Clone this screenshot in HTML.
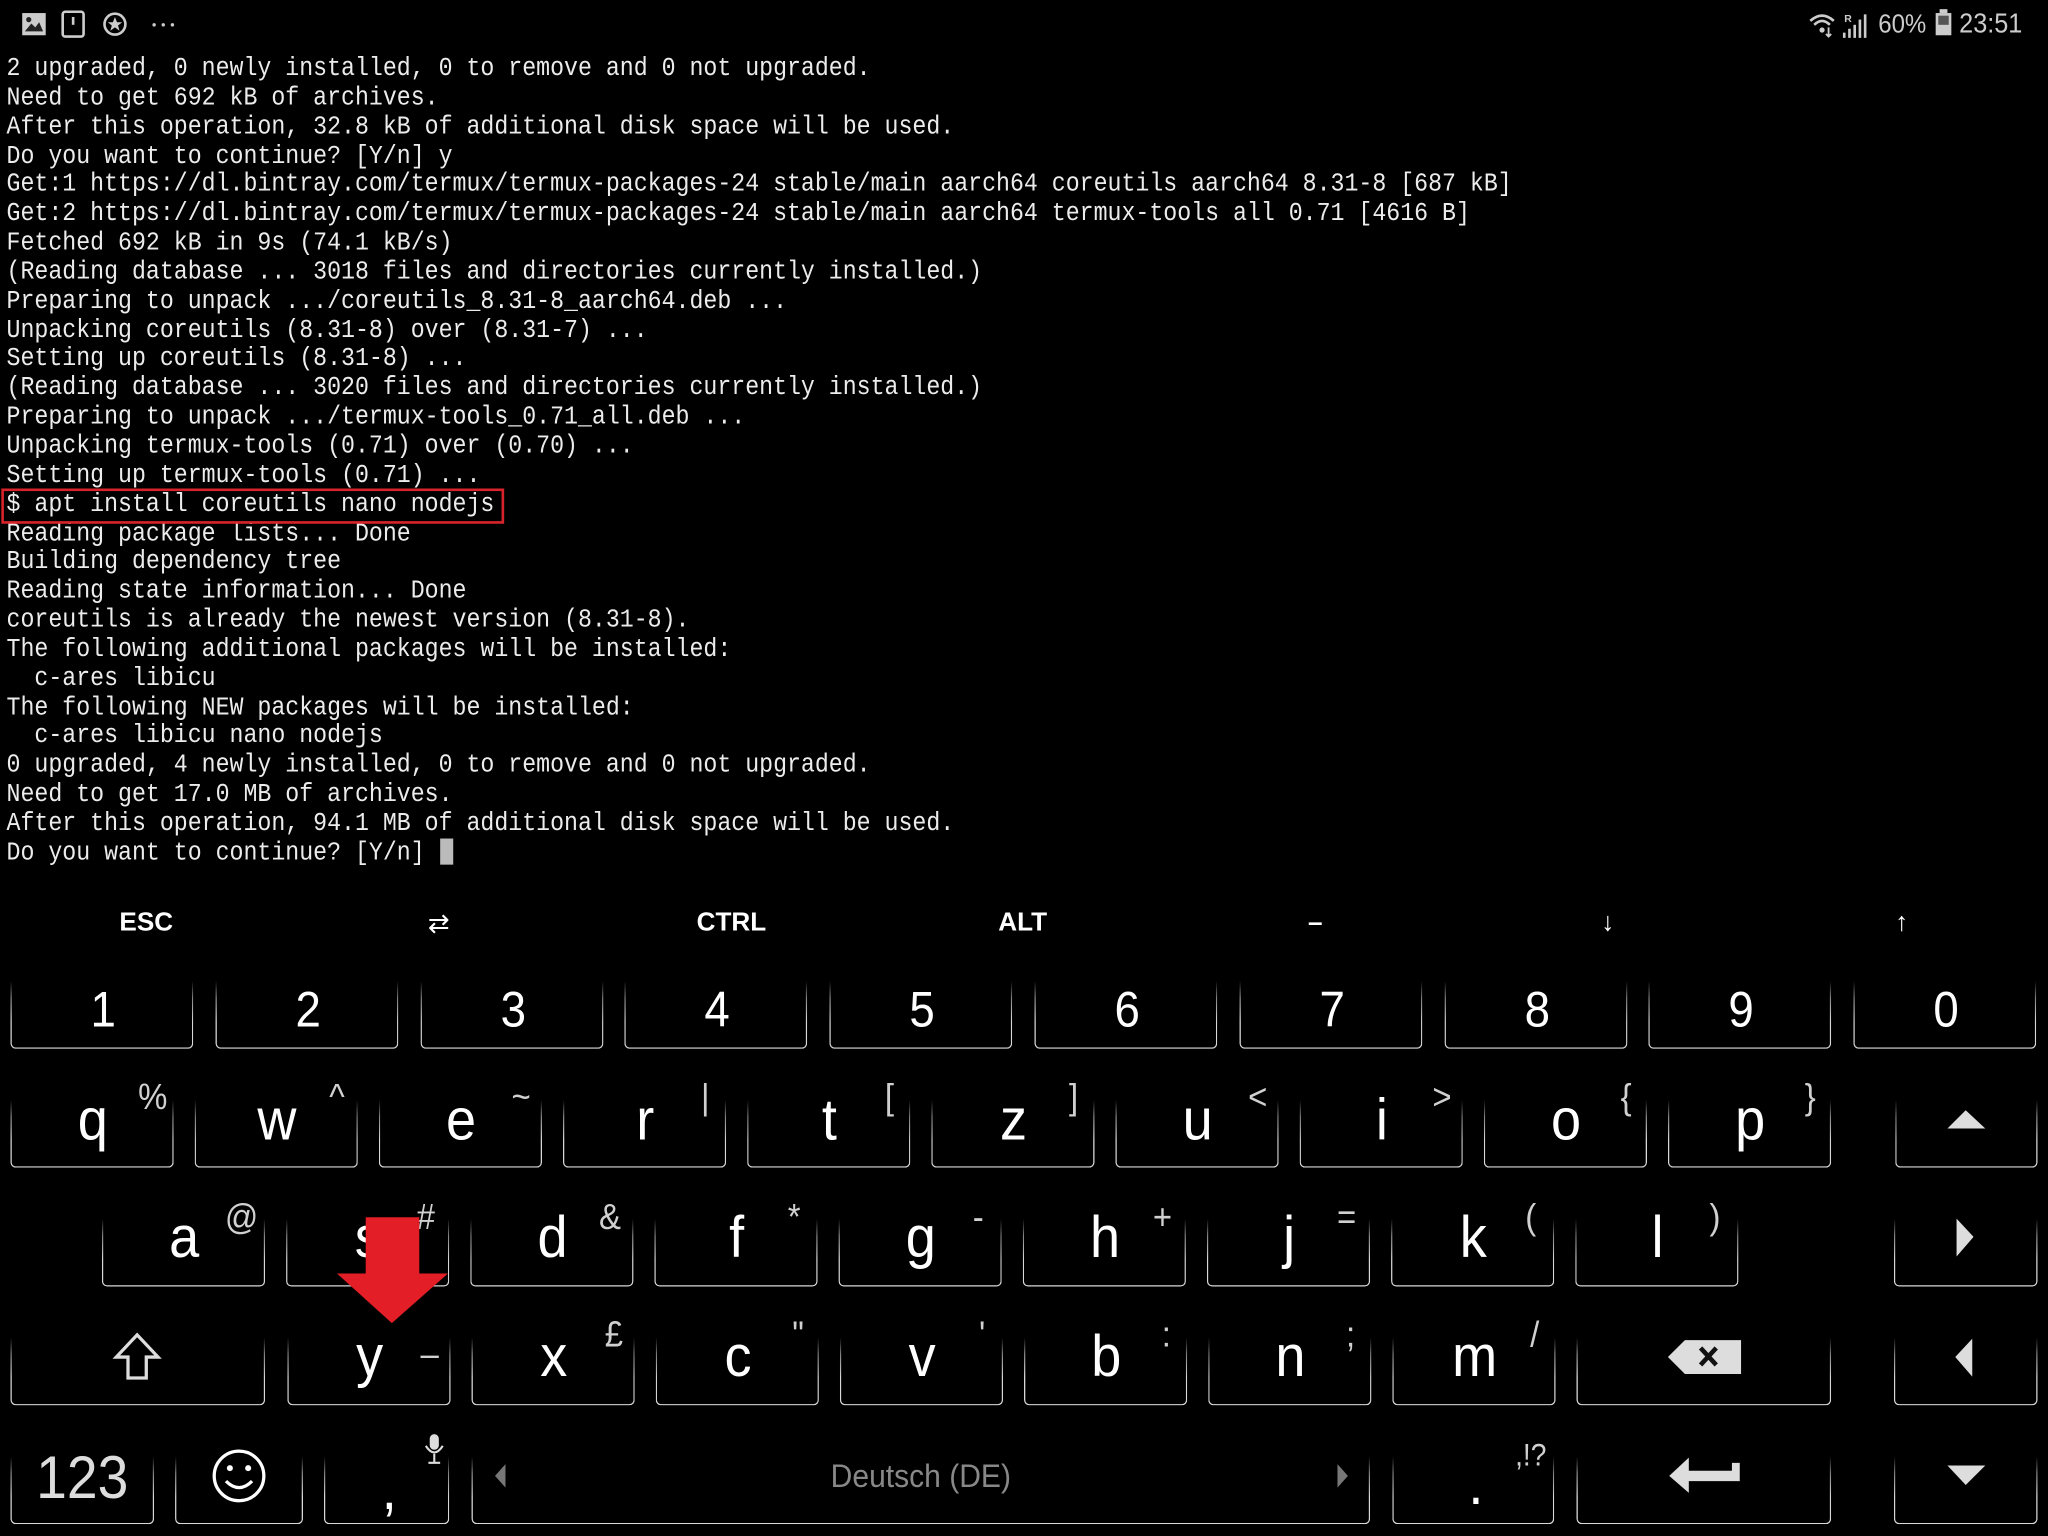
<!DOCTYPE html>
<html><head><meta charset="utf-8"><style>
html,body{margin:0;padding:0;background:#000;overflow:hidden}
#w{position:absolute;left:0;top:0;width:1568px;height:1176px;transform:scale(1.306122);transform-origin:0 0;background:#000;font-family:"Liberation Sans",sans-serif;color:#fff}
.t{position:absolute;left:5px;top:43px;font-family:"Liberation Mono",monospace;font-size:17.8px;line-height:19.84px;color:#ececec;white-space:pre;margin:0;transform:scaleY(1.12);transform-origin:0 0}
.k{position:absolute;height:52px;border:1.6px solid #d8d8d8;border-top:none;border-radius:0 0 4px 4px;box-sizing:border-box;-webkit-mask-image:linear-gradient(to bottom,transparent 0%,rgba(0,0,0,.6) 25%,#000 60%);box-shadow:0 1px 3px rgba(255,255,255,.35)}
.L{position:absolute;transform:translate(-50%,-50%) scaleX(.92);font-size:45px;line-height:1;white-space:nowrap}
.S{position:absolute;transform:translate(-50%,-50%) scaleX(.9);font-size:28px;line-height:1;color:#d0d0d0}
.x{position:absolute;transform:translate(-50%,-50%);font-size:20px;font-weight:bold;color:#fff}
</style></head><body><div id="w">
<svg style="position:absolute;left:15px;top:8px" width="125" height="22" viewBox="0 0 125 22">
<rect x="2" y="2" width="18" height="17" fill="#ccc"/><path d="M4 16 L9 10 L12 13 L15 9 L18 16Z" fill="#222"/><circle cx="7" cy="7" r="2" fill="#222"/>
<rect x="33" y="1" width="16" height="19" rx="2" fill="none" stroke="#ccc" stroke-width="2"/><rect x="40" y="5" width="2" height="6" fill="#ccc"/>
<circle cx="73" cy="10.5" r="8" fill="none" stroke="#ccc" stroke-width="2"/><path d="M73 5 L74.6 9 L78.5 9 L75.4 11.5 L76.5 15.5 L73 13 L69.5 15.5 L70.6 11.5 L67.5 9 L71.4 9Z" fill="#ccc"/>
<circle cx="103" cy="11" r="1.3" fill="#ccc"/><circle cx="110" cy="11" r="1.3" fill="#ccc"/><circle cx="117" cy="11" r="1.3" fill="#ccc"/>
</svg>
<svg style="position:absolute;left:1384px;top:8px" width="52" height="22" viewBox="0 0 52 22">
<path d="M2 8 Q11 0 20 8" stroke="#ccc" stroke-width="2" fill="none"/><path d="M5 11 Q11 5 17 11" stroke="#ccc" stroke-width="2" fill="none"/><circle cx="11" cy="15" r="2" fill="#ccc"/>
<path d="M16 13 V20 M14 18 L16 20 L18 18" stroke="#ccc" stroke-width="1.4" fill="none"/>
<text x="28" y="9" font-size="8" fill="#ccc" font-family="Liberation Sans" font-weight="bold">R</text>
<rect x="27" y="17" width="2" height="4" fill="#ccc"/><rect x="31" y="14" width="2" height="7" fill="#ccc"/><rect x="35" y="11" width="2" height="10" fill="#ccc"/><rect x="39" y="7" width="2" height="14" fill="#ccc"/><rect x="43" y="3" width="2" height="18" fill="#ccc"/>
</svg>
<div style="position:absolute;left:1438px;top:8px;font-size:20px;color:#ccc;transform:scaleX(.92);transform-origin:0 0">60%</div>
<div style="position:absolute;left:1482px;top:10px;width:12px;height:17px;background:#ccc"><div style="position:absolute;left:3px;top:-3px;width:6px;height:3px;background:#ccc"></div><div style="position:absolute;left:2px;top:2px;width:8px;height:7px;background:#555"></div></div>
<div style="position:absolute;left:1500px;top:7px;font-size:21px;color:#ccc;transform:scaleX(.92);transform-origin:0 0">23:51</div>

<pre class="t">2 upgraded, 0 newly installed, 0 to remove and 0 not upgraded.
Need to get 692 kB of archives.
After this operation, 32.8 kB of additional disk space will be used.
Do you want to continue? [Y/n] y
Get:1 https://dl.bintray.com/termux/termux-packages-24 stable/main aarch64 coreutils aarch64 8.31-8 [687 kB]
Get:2 https://dl.bintray.com/termux/termux-packages-24 stable/main aarch64 termux-tools all 0.71 [4616 B]
Fetched 692 kB in 9s (74.1 kB/s)
(Reading database ... 3018 files and directories currently installed.)
Preparing to unpack .../coreutils_8.31-8_aarch64.deb ...
Unpacking coreutils (8.31-8) over (8.31-7) ...
Setting up coreutils (8.31-8) ...
(Reading database ... 3020 files and directories currently installed.)
Preparing to unpack .../termux-tools_0.71_all.deb ...
Unpacking termux-tools (0.71) over (0.70) ...
Setting up termux-tools (0.71) ...
$ apt install coreutils nano nodejs
Reading package lists... Done
Building dependency tree
Reading state information... Done
coreutils is already the newest version (8.31-8).
The following additional packages will be installed:
  c-ares libicu
The following NEW packages will be installed:
  c-ares libicu nano nodejs
0 upgraded, 4 newly installed, 0 to remove and 0 not upgraded.
Need to get 17.0 MB of archives.
After this operation, 94.1 MB of additional disk space will be used.
Do you want to continue? [Y/n] </pre>
<div style="position:absolute;left:337px;top:642px;width:10px;height:20px;background:#bbb"></div>
<div style="position:absolute;left:1px;top:374px;width:381px;height:23px;border:2.5px solid #d8232a"></div>

<div class="x" style="left:112px;top:707px">ESC</div>
<div class="x" style="left:336px;top:707px;font-weight:normal">⇄</div>
<div class="x" style="left:560px;top:707px">CTRL</div>
<div class="x" style="left:783px;top:707px">ALT</div>
<div class="x" style="left:1007px;top:707px">–</div>
<div class="x" style="left:1231px;top:707px;font-weight:normal">↓</div>
<div class="x" style="left:1456px;top:707px;font-weight:normal">↑</div>

<div id="kb"></div>
<svg style="position:absolute;left:0;top:0" width="1568" height="1176">
<path d="M105 1022 L89 1039 L98 1039 L98 1055 L112 1055 L112 1039 L121 1039Z" fill="none" stroke="#ddd" stroke-width="2.5"/>
<path d="M1491 864 L1505 850 L1520 864Z" fill="#ddd"/>
<path d="M1498 933 L1511 947 L1498 962Z" fill="#ddd"/>
<path d="M1510 1025 L1497 1039 L1510 1054Z" fill="#ddd"/>
<path d="M1491 1122 L1520 1122 L1505 1137Z" fill="#ddd"/>
<path d="M1277 1039 L1290 1026 L1333 1026 L1333 1052 L1290 1052Z" fill="#ddd"/>
<path d="M1302 1032 L1314 1045 M1314 1032 L1302 1045" stroke="#111" stroke-width="3.5"/>
<path d="M1278 1130 L1293 1116 L1293 1126 L1326 1126 L1326 1120 L1332 1120 L1332 1134 L1293 1134 L1293 1143Z" fill="#ddd"/>
<path d="M387 1121 L379 1130 L387 1139Z" fill="#777"/>
<path d="M1024 1121 L1032 1130 L1024 1139Z" fill="#777"/>
<circle cx="183" cy="1130" r="19" fill="none" stroke="#fff" stroke-width="2.5"/>
<circle cx="176" cy="1124" r="2.3" fill="#fff"/><circle cx="190" cy="1124" r="2.3" fill="#fff"/>
<path d="M173 1134 Q183 1144 193 1134" fill="none" stroke="#fff" stroke-width="2.5"/>
<rect x="329" y="1098" width="7" height="12" rx="3.5" fill="#ddd"/><path d="M326 1107 Q332.5 1117 339 1107 M332.5 1113 V1120 M328 1120 H337" stroke="#ddd" stroke-width="1.6" fill="none"/>
<path d="M280 932 L321 932 L321 975 L343 975 L300 1013 L258 975 L280 975Z" fill="#e41e26"/>
</svg>
<script>
var kb=document.getElementById('kb'),h='';
function key(x,w,b){h+='<div class="k" style="left:'+x+'px;width:'+w+'px;top:'+(b-52)+'px"></div>';}
function L(x,y,t,s){h+='<div class="L" style="left:'+x+'px;top:'+y+'px;'+(s||'')+'">'+t+'</div>';}
function S(x,y,t,s){h+='<div class="S" style="left:'+x+'px;top:'+y+'px;'+(s||'')+'">'+t+'</div>';}
var n='1234567890';
for(var i=0;i<10;i++){var x=8+156.8*i;key(x,140,803);L(x+71,774,n[i],'font-size:38px');}
var r2='qwertzuiop',s2=['%','^','~','|','[',']','&lt;','&gt;','{','}'];
for(i=0;i<10;i++){x=8+141*i;key(x,125,894);L(x+63,857,r2[i]);S(x+109,840,s2[i]);}
key(1451,109,894);
var r3='asdfghjkl',s3=['@','#','&amp;','*','-','+','=','(',')'];
for(i=0;i<9;i++){x=78+141*i;key(x,125,985);L(x+63,947,r3[i]);S(x+107,932,s3[i]);}
key(1450,110,985);
key(8,195,1076);
var r4='yxcvbnm',s4=['–','£','"',"'",':',';','/'];
for(i=0;i<7;i++){x=220+141*i;key(x,125,1076);L(x+63,1038,r4[i]);S(x+109,i==0?1037:1022,s4[i]);}
key(1207,195,1076);key(1450,110,1076);
key(8,110,1167);L(63,1131,'123','color:#ddd;font-size:46px');
key(134,98,1167);key(248,96,1167);L(298,1140,',');
key(361,688,1167);h+='<div class="L" style="left:705px;top:1131px;font-size:25px;color:#888">Deutsch (DE)</div>';
key(1066,124,1167);L(1130,1136,'.');S(1172,1115,',!?','font-size:24px');
key(1207,195,1167);key(1450,110,1167);
kb.innerHTML=h;
</script>
</div></body></html>
